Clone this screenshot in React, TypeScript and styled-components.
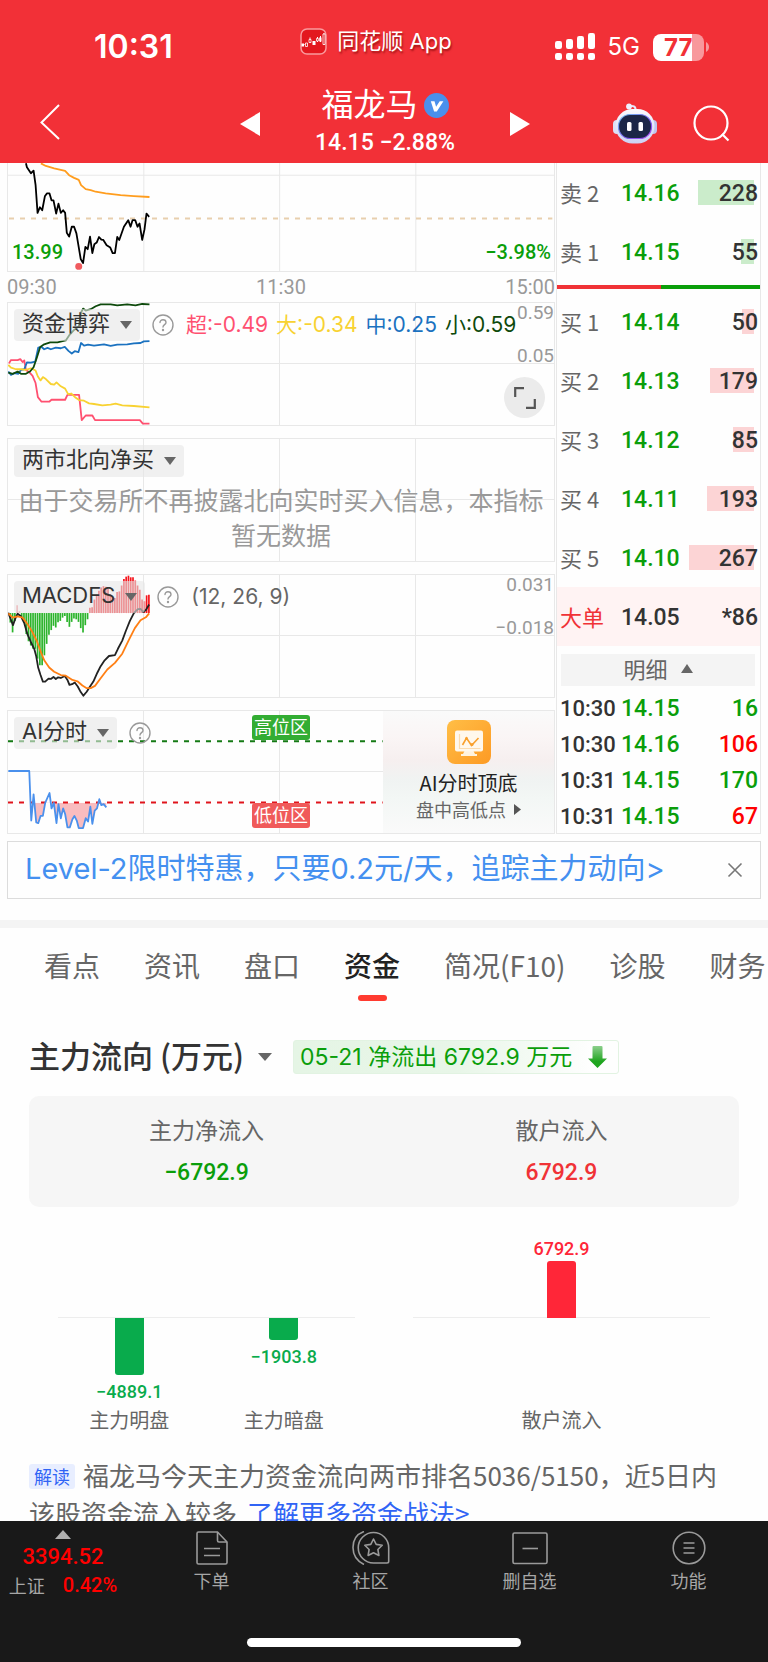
import React from 'react';
import styled, { createGlobalStyle, css } from 'styled-components';

const sans = `Inter, "Noto Sans CJK SC", sans-serif`;
const cjk = `"Noto Sans CJK SC", sans-serif`;
const digits = `Roboto, "Noto Sans CJK SC", sans-serif`;

const color = {
  brand: '#f23037',
  up: '#ff0000',
  rise: '#f03236',
  down: '#0a9e0a',
  ink: '#333333',
  text: '#666666',
  muted: '#999999',
  line: '#e8e8e8',
  link: '#3064f5',
  barUp: '#ff2638',
  barDown: '#09ab4c',
};

const GlobalStyle = createGlobalStyle`
  *, *::before, *::after { box-sizing: border-box; }
  body { margin: 0; background: #fefefe; font-family: ${sans}; color: ${color.ink}; }
  button { border: 0; padding: 0; margin: 0; background: none; font: inherit; color: inherit; cursor: pointer; }
  a { color: inherit; text-decoration: none; }
  h1, h2, p { margin: 0; font-weight: 400; }
  svg { display: block; flex: none; }
`;

const Screen = styled.div`
  display: flex;
  flex-direction: column;
  height: 100vh;
  overflow: hidden;
`;

/* ---------- header ---------- */

const Header = styled.header`
  flex: none;
  background: ${color.brand};
  color: #fff;
`;

const StatusBar = styled.div`
  display: grid;
  grid-template-columns: 1fr auto 1fr;
  align-items: center;
  height: 80px;
  padding: 14px 59px 0 43px;
`;

const Clock = styled.time`
  padding-left: 51px;
  font-size: 32px;
  line-height: 40px;
  font-weight: 600;
`;

const AppMark = styled.div`
  display: flex;
  align-items: center;
  gap: 10px;
  padding-bottom: 12px;
  font-size: 22px;
  line-height: 30px;
  text-shadow: 1px 2px 2px rgba(110, 0, 0, 0.6);
`;

const StatusIcons = styled.div`
  display: flex;
  justify-content: flex-end;
  align-items: center;
  gap: 13px;
  font-size: 24px;
  line-height: 28px;
`;

const NavBar = styled.div`
  display: grid;
  grid-template-columns: 1fr auto 1fr;
  align-items: center;
  height: 83px;
  padding: 4px 38px 0 40px;
`;

const NavCenter = styled.div`
  display: flex;
  align-items: center;
  gap: 51px;
`;

const NavActions = styled.div`
  display: flex;
  justify-content: flex-end;
  align-items: center;
  gap: 36px;
`;

const Stock = styled.div`
  width: 148px;
  display: flex;
  flex-direction: column;
  align-items: center;
`;

const StockName = styled.h1`
  display: flex;
  align-items: center;
  gap: 6px;
  padding-bottom: 6px;
  font-family: ${cjk};
  font-size: 32px;
  line-height: 32px;
  white-space: nowrap;

  svg { margin-top: 7px; }
`;

const StockQuote = styled.div`
  font-family: ${digits};
  font-size: 23px;
  line-height: 38px;
  font-weight: 500;
  white-space: nowrap;
`;

/* ---------- quote area ---------- */

const Scroller = styled.main`
  flex: 1;
  min-height: 0;
  overflow: hidden;
`;

const QuoteArea = styled.section`
  display: grid;
  grid-template-columns: minmax(0, 1fr) 206px;
  padding: 0 7px;
`;

const Charts = styled.div`
  display: flex;
  flex-direction: column;
  gap: 12px;
`;

const Panel = styled.div<{ $h: number }>`
  position: relative;
  height: ${(p) => p.$h}px;
  border: 1px solid ${color.line};
  border-width: ${(p) => (p.$h < 120 ? '0 1px 1px' : '1px')};
`;

const Plot = styled.svg`
  position: absolute;
  inset: 0;
  width: 100%;
  height: 100%;

  * { vector-effect: non-scaling-stroke; }
`;

const AxisRow = styled.div`
  display: flex;
  justify-content: space-between;
  height: 30px;
  margin-bottom: -12px;
  font-family: ${digits};
  font-size: 20px;
  line-height: 30px;
  color: ${color.muted};
`;

const CornerLabels = styled.div`
  position: absolute;
  left: 4px;
  right: 3px;
  bottom: 6px;
  display: flex;
  justify-content: space-between;
  font-family: ${digits};
  font-size: 20px;
  line-height: 26px;
  font-weight: 500;
  color: ${color.down};
`;

const PanelHead = styled.div`
  position: relative;
  display: flex;
  align-items: center;
  gap: 12px;
  padding: 6px 0 0 6px;
  height: 38px;
`;

const Pill = styled.button`
  display: flex;
  align-items: center;
  gap: 10px;
  height: 32px;
  padding: 0 8px 4px;
  border-radius: 4px;
  background: rgba(230, 230, 230, 0.6);
  font-size: 22px;
  line-height: 28px;
  white-space: nowrap;

  svg { margin-top: 4px; }
`;

const Legend = styled.div`
  display: flex;
  gap: 8px;
  font-size: 21px;
  line-height: 28px;
  white-space: nowrap;
`;

const LegendItem = styled.span<{ $c: string }>`
  color: ${(p) => p.$c};
`;

const AxisValues = styled.div`
  position: absolute;
  top: -3px;
  right: 0;
  display: flex;
  flex-direction: column;
  gap: 17px;
  text-align: right;
  font-family: ${digits};
  font-size: 19px;
  line-height: 26px;
  color: ${color.muted};
`;

const ExpandButton = styled.button`
  position: absolute;
  right: 9px;
  bottom: 7px;
  width: 41px;
  height: 41px;
  border-radius: 50%;
  background: #ebebeb;
  display: grid;
  place-items: center;
`;

const EmptyNote = styled.p`
  position: relative;
  padding: 5px 9px 0;
  text-align: center;
  font-family: ${cjk};
  font-size: 25px;
  line-height: 35px;
  color: ${color.muted};
`;

const ZoneTag = styled.span<{ $low?: boolean }>`
  position: absolute;
  left: 244px;
  top: ${(p) => (p.$low ? 92 : 4)}px;
  padding: 0 2px 3px;
  border-radius: 3px;
  background: ${(p) => (p.$low ? '#f05a5a' : '#33ad33')};
  color: #fff;
  font-family: ${cjk};
  font-size: 18px;
  line-height: 22px;
`;

const Promo = styled.a`
  position: absolute;
  right: 0;
  top: 0;
  bottom: 0;
  width: 171px;
  display: flex;
  flex-direction: column;
  align-items: center;
  padding-top: 9px;
  background: linear-gradient(180deg, #fafafa 0%, #faf5f5 22%, #f6efef 40%, #f0f3f2 56%, #f3f7f5 72%, #fafafa 100%);
  font-family: ${cjk};
`;

const PromoTitle = styled.span`
  margin-top: 6px;
  font-size: 20px;
  line-height: 26px;
  color: #222;
`;

const PromoSub = styled.span`
  display: flex;
  align-items: center;
  gap: 8px;
  font-size: 18px;
  line-height: 26px;
  color: ${color.text};
`;

/* ---------- order book ---------- */

const Book = styled.aside`
  border: 1px solid ${color.line};
  border-width: 0 1px 1px;
  font-family: ${digits};
  margin-left: 1px;
`;

const BookTable = styled.table<{ $row: number }>`
  width: 100%;
  table-layout: fixed;
  border-collapse: collapse;

  tr { height: ${(p) => p.$row}px; }
  th, td { padding: 3px 0 0; font-weight: 500; font-size: 23px; line-height: 32px; text-align: left; white-space: nowrap; }
  th { width: 64px; padding-left: 3px; font-size: 22px; }
  td:last-child { padding-right: 2px; text-align: right; }
`;

const Level = styled.th<{ $hot?: boolean }>`
  && {
    padding-top: 0;
    padding-bottom: 2px;
    font-family: ${cjk};
    font-weight: 400;
    color: ${(p) => (p.$hot ? color.rise : color.text)};
  }
`;

const Price = styled.td<{ $c: string }>`
  color: ${(p) => p.$c};
`;

const Qty = styled.td<{ $c?: string }>`
  position: relative;
  color: ${(p) => p.$c ?? color.ink};
`;

const DepthBar = styled.i<{ $sell: boolean }>`
  position: absolute;
  right: 6px;
  top: 50%;
  height: 25px;
  margin-top: -13px;
  background: ${(p) => (p.$sell ? '#cbeccb' : '#fcd4d5')};
`;

const QtyText = styled.span`
  position: relative;
`;

const BigOrder = styled.tr`
  background: #fff3f3;
`;

const Balance = styled.div`
  display: flex;
  height: 4px;
  margin: 4px 0 3px;
`;

const BalancePart = styled.div<{ $c: string }>`
  background: ${(p) => p.$c};
`;

const DetailButton = styled.button`
  display: flex;
  align-items: center;
  justify-content: center;
  gap: 13px;
  width: calc(100% - 9px);
  height: 32px;
  margin: 8px 4px 3px;
  padding-bottom: 3px;
  background: #f4f4f4;
  font-family: ${cjk};
  font-size: 22px;
  line-height: 29px;
  color: ${color.text};
`;

/* ---------- banner and tabs ---------- */

const Banner = styled.div`
  display: flex;
  align-items: center;
  justify-content: space-between;
  height: 58px;
  margin: 7px 7px 0;
  padding: 0 17px;
  border: 1px solid #dcdcdc;
`;

const BannerLink = styled.a`
  padding-bottom: 3px;
  font-size: 29px;
  line-height: 40px;
  color: #4490f0;
  white-space: nowrap;
`;

const Tabs = styled.nav`
  display: flex;
  gap: 44px;
  margin-top: 21px;
  padding: 17px 0 0 44px;
  border-top: 8px solid #f4f4f4;
  overflow: hidden;
`;

const Tab = styled.button<{ $on?: boolean }>`
  flex: none;
  display: flex;
  flex-direction: column;
  align-items: center;
  gap: 10px;
  font-family: ${cjk};
  font-size: 28px;
  line-height: 40px;
  color: ${color.text};

  &::after {
    content: '';
    width: 29px;
    height: 6px;
    border-radius: 3px;
    background: transparent;
  }

  ${(p) =>
    p.$on &&
    css`
      font-weight: 500;
      color: #222;
      &::after { background: #ff3b30; }
    `}
`;

/* ---------- capital flow ---------- */

const Flow = styled.section`
  padding: 38px 29px 0;
  font-family: ${cjk};
`;

const FlowHead = styled.div`
  display: flex;
  align-items: center;
  gap: 21px;
  height: 36px;
`;

const FlowTitle = styled.h2`
  padding-bottom: 4px;
  font-size: 31px;
  line-height: 36px;
  font-weight: 500;
`;

const TitleButton = styled.button`
  display: flex;
  align-items: center;
  gap: 14px;
  white-space: nowrap;

  svg { margin-top: 4px; }
`;

const FlowBadge = styled.span`
  display: flex;
  align-items: center;
  gap: 16px;
  height: 34px;
  padding: 0 11px 0 6px;
  border: 1px solid #e2f3e2;
  border-radius: 3px;
  background: linear-gradient(90deg, #e5f5e5 0%, #e8f6e8 50%, #fefefe 92%);
  font-family: ${sans};
  font-size: 23px;
  line-height: 32px;
  color: ${color.down};
  white-space: nowrap;
`;

const Summary = styled.div`
  display: flex;
  margin-top: 21px;
  padding: 16px 0 17px;
  border-radius: 10px;
  background: #f6f6f6;
`;

const SummaryItem = styled.div`
  flex: 1;
  display: flex;
  flex-direction: column;
  align-items: center;
  gap: 8px;
  font-size: 23px;
  line-height: 35px;
  color: ${color.text};
`;

const SummaryValue = styled.strong<{ $c: string }>`
  font-family: ${digits};
  font-weight: 500;
  color: ${(p) => p.$c};
`;

const BarGroups = styled.div`
  display: flex;
`;

const BarGroup = styled.div`
  flex: 1;
  display: flex;
  gap: 12px;
  margin: 0 29px;
  background: linear-gradient(#ededed, #ededed) 0 110px / 100% 1px no-repeat;
`;

const BarColumn = styled.div`
  flex: 1;
  display: flex;
  flex-direction: column;
  align-items: center;
  font-size: 20px;
  line-height: 24px;
  color: ${color.text};
`;

const Half = styled.div<{ $up?: boolean }>`
  display: flex;
  flex-direction: column;
  align-items: center;
  justify-content: ${(p) => (p.$up ? 'flex-end' : 'flex-start')};
  gap: ${(p) => (p.$up ? 0 : 5)}px;
  height: ${(p) => (p.$up ? 111 : 90)}px;
`;

const FlowBar = styled.div<{ $up?: boolean }>`
  width: 29px;
  border-radius: ${(p) => (p.$up ? '3px 3px 0 0' : '0 0 3px 3px')};
  background: ${(p) => (p.$up ? color.barUp : color.barDown)};
`;

const BarValue = styled.span<{ $up?: boolean }>`
  font-family: ${digits};
  font-size: 18px;
  line-height: 24px;
  font-weight: 500;
  color: ${(p) => (p.$up ? color.barUp : color.barDown)};
`;

const Reading = styled.p`
  margin-top: 24px;
  font-size: 26px;
  line-height: 38px;
  color: ${color.text};
`;

const ReadingTag = styled.span`
  display: inline-block;
  margin-right: 8px;
  padding: 0 5px;
  border-radius: 3px;
  background: #e8eeff;
  font-size: 18px;
  line-height: 25px;
  vertical-align: 2px;
  color: ${color.link};
`;

const ReadingLink = styled.a`
  margin-left: 10px;
  color: ${color.link};
`;

/* ---------- bottom bar ---------- */

const Footer = styled.footer`
  flex: none;
  background: #191919;
  color: #a6a6a6;
`;

const FooterRow = styled.nav`
  display: grid;
  grid-template-columns: 132px repeat(4, 1fr);
  height: 117px;
`;

const IndexButton = styled.button`
  display: flex;
  flex-direction: column;
  align-items: center;
  align-self: start;
  padding: 9px 6px 0 0;
`;

const IndexValue = styled.span`
  padding-top: 3px;
  font-family: ${digits};
  font-size: 22px;
  line-height: 30px;
  font-weight: 500;
  color: ${color.up};
`;

const IndexChange = styled.span`
  display: flex;
  gap: 18px;
  font-family: ${cjk};
  font-size: 18px;
  line-height: 26px;

  b {
    font-family: ${digits};
    font-size: 20px;
    font-weight: 500;
    color: ${color.up};
  }
`;

const FooterButton = styled.button`
  display: flex;
  flex-direction: column;
  align-items: center;
  align-self: start;
  gap: 2px;
  padding-top: 10px;
  font-family: ${cjk};
  font-size: 18px;
  line-height: 26px;
`;

const HomeIndicator = styled.div`
  width: 274px;
  height: 9px;
  margin: 0 auto 15px;
  border-radius: 5px;
  background: #fff;
`;

/* ---------- icons ---------- */

const Caret = ({ up, w = 12, h = 8, fill = '#666' }: { up?: boolean; w?: number; h?: number; fill?: string }) => (
  <svg width={w} height={h} viewBox="0 0 12 8" preserveAspectRatio="none">
    <path d={up ? 'M6 0L12 8H0z' : 'M0 0h12L6 8z'} fill={fill} />
  </svg>
);

const HelpIcon = () => (
  <svg width="22" height="22" viewBox="0 0 22 22" fill="none" stroke="#999" strokeWidth="1.4" strokeLinecap="round">
    <circle cx="11" cy="11" r="10" />
    <path d="M8 8.600c0-1.800 1.300-2.900 3-2.900s3 1.100 3 2.700c0 2.200-3 2.300-3 4.600" />
    <circle cx="11" cy="16" r=".500" />
  </svg>
);

const AppIcon = () => (
  <svg width="27" height="27" viewBox="0 0 27 27">
    <rect x="1" y="1" width="25" height="25" rx="6" fill="#e3181e" stroke="#f99a9d" strokeWidth="1.5" />
    <path d="M2 16.500h2.600M10 9.500v5M14 13v4M17.500 9v5M20.500 8v6M24 5v12" stroke="#fff" strokeWidth="1" fill="none" />
    <path d="M1.500 15.500h2.500v3H1.500zM12.500 13h3v4h-3zM19.200 9.500h2.300v4h-2.300z" fill="#fff" />
    <path d="M5.500 15h2v3.500h-2zM9 11.500h2v3H9zM16.500 10.500h1.800v2.500h-1.800zM23 6h2v10.500h-2z" fill="#e3181e" stroke="#fff" strokeWidth=".8" />
  </svg>
);

const SignalIcon = () => (
  <svg width="40" height="28" viewBox="0 0 40 28" fill="#fff">
    {[[0, 8, 8], [11, 6, 10], [22, 3, 13], [33, 0, 16]].map(([x, y, h]) => (
      <React.Fragment key={x}>
        <rect x={x} y={y} width="7" height={h} rx="2.200" />
        <rect x={x} y="20" width="7" height="7" rx="2.200" />
      </React.Fragment>
    ))}
  </svg>
);

const BatteryBox = styled.div`
  display: flex;
  align-items: center;
  gap: 2px;
`;

const BatteryLevel = styled.span`
  width: 51px;
  height: 27px;
  padding-left: 11px;
  border-radius: 8px;
  background: linear-gradient(90deg, #fff 76%, #f8989c 76%);
  color: ${color.brand};
  font-size: 24px;
  line-height: 27px;
  font-weight: 700;
`;

const BackIcon = () => (
  <svg width="20" height="36" viewBox="0 0 20 36" fill="none" stroke="#fff" strokeWidth="2">
    <path d="M19 1L1.500 18.500 19 35" />
  </svg>
);

const VerifiedIcon = () => (
  <svg width="25" height="25" viewBox="0 0 25 25">
    <circle cx="12.500" cy="12.500" r="12.500" fill="#4a90ec" />
    <path d="M6.800 8.200h3.700l1.600 5.600 3.600-5.600h3.700l-6.600 10.200h-2.700z" fill="#fff" />
  </svg>
);

const RobotIcon = () => (
  <svg width="44" height="41" viewBox="0 0 44 41">
    <defs>
      <linearGradient id="shell" x1="0" y1="0" x2="0" y2="1">
        <stop offset="0" stopColor="#fbfbff" />
        <stop offset="1" stopColor="#ccd2f4" />
      </linearGradient>
      <linearGradient id="rim" x1="0" y1="0" x2="1" y2="1">
        <stop offset="0" stopColor="#74c6f0" />
        <stop offset=".6" stopColor="#7a5af0" />
        <stop offset="1" stopColor="#b04cf0" />
      </linearGradient>
    </defs>
    <path d="M16 3.500c4-1.500 7 0 6.500 4" fill="none" stroke="#e6e8fb" strokeWidth="2" />
    <circle cx="16" cy="3.400" r="2.900" fill="#eef0ff" />
    <rect x="0" y="17" width="8" height="14" rx="4" fill="#dde0f6" />
    <rect x="36" y="17" width="8" height="14" rx="4" fill="#bfc5ee" />
    <rect x="2.500" y="6" width="39" height="34.500" rx="17" fill="url(#shell)" />
    <rect x="5.500" y="11.500" width="33" height="24" rx="11.500" fill="#1c2647" stroke="url(#rim)" strokeWidth="1.200" />
    <rect x="14" y="19" width="4.500" height="9" rx="1.500" fill="#fff" />
    <rect x="25.500" y="19" width="4.500" height="9" rx="1.500" fill="#fff" />
  </svg>
);

const SearchIcon = () => (
  <svg width="37" height="37" viewBox="0 0 37 37" fill="none" stroke="#fff" strokeWidth="2.200">
    <circle cx="18" cy="18" r="16.500" />
    <path d="M29 29l6.500 6.500" />
  </svg>
);

const ExpandIcon = () => (
  <svg width="22" height="22" viewBox="0 0 22 22" fill="none" stroke="#555" strokeWidth="2.200">
    <path d="M1.200 10V1.200H10M20.800 12v8.800H12" />
  </svg>
);

const BoardIcon = () => (
  <svg width="44" height="44" viewBox="0 0 44 44">
    <defs>
      <linearGradient id="gold" x1="0" y1="0" x2="1" y2="1">
        <stop offset="0" stopColor="#ffbe46" />
        <stop offset="1" stopColor="#fd9a24" />
      </linearGradient>
    </defs>
    <rect width="44" height="44" rx="8" fill="url(#gold)" />
    <path d="M17.500 31h9l1.500 3h2v2H14v-2h2z" fill="#fff3de" />
    <rect x="8" y="10.500" width="28" height="21" rx="2" fill="#fff8ec" />
    <path d="M12.500 14v14.500h21" fill="none" stroke="#fbdcae" strokeWidth="1.200" />
    <path d="M15.500 25l4-7 5 7.500 7-7.500" fill="none" stroke="#f9a02c" strokeWidth="1.600" />
    <circle cx="19.500" cy="18.500" r="1.500" fill="#f9a02c" />
    <circle cx="25" cy="24.500" r="1.500" fill="#f9a02c" />
  </svg>
);

const OrderIcon = () => (
  <svg width="34" height="34" viewBox="0 0 34 34" fill="none" stroke="#9a9a9a" strokeWidth="1.600">
    <path d="M22.500 1H3.500a1.500 1.500 0 0 0-1.500 1.500v29a1.500 1.500 0 0 0 1.500 1.500h27a1.500 1.500 0 0 0 1.500-1.500V11z" />
    <path d="M22.500 1v8.500A1.500 1.500 0 0 0 24 11h8M9 17.500h16M9 24.500h16" />
  </svg>
);

const CommunityIcon = () => (
  <svg width="38" height="34" viewBox="0 1 38 34" fill="none" stroke="#9a9a9a" strokeWidth="1.600">
    <path d="M12 1.500C5 4 1 10 1 17.500S5 31 12 34.500" />
    <path d="M21.500 2.500a15.200 15.200 0 1 0 0 30.500H35a1.700 1.700 0 0 0 1.700-1.700V17.700A15.200 15.200 0 0 0 21.500 2.500z" />
    <path d="M21.500 9l2.700 5.400 6 .9-4.300 4.200 1 6-5.400-2.800-5.400 2.800 1-6-4.300-4.200 6-.9z" strokeLinejoin="round" />
  </svg>
);

const RemoveIcon = () => (
  <svg width="36" height="34" viewBox="0 0 36 34" fill="none" stroke="#9a9a9a" strokeWidth="1.600">
    <rect x="1" y="2" width="34" height="30.500" rx="1.500" />
    <path d="M10.500 17.500h15.500" />
  </svg>
);

const MenuIcon = () => (
  <svg width="34" height="34" viewBox="0 0 34 34" fill="none" stroke="#9a9a9a" strokeWidth="1.600">
    <circle cx="17" cy="17" r="15.800" />
    <path d="M11.500 12h11M11.500 17h11M11.500 22h11" />
  </svg>
);

const DownArrow = () => (
  <svg width="19" height="22" viewBox="0 0 19 22">
    <defs>
      <linearGradient id="drop" x1="0" y1="0" x2="0" y2="1">
        <stop offset="0" stopColor="#8ccf8c" />
        <stop offset=".7" stopColor="#1fa51f" />
      </linearGradient>
    </defs>
    <path d="M4.500 1a1 1 0 0 1 1-1h8a1 1 0 0 1 1 1v11.500H19L9.500 22 0 12.500h4.500z" fill="url(#drop)" />
  </svg>
);

/* ---------- data ---------- */

const sells = [['卖 2', '14.16', 228], ['卖 1', '14.15', 55]] as const;
const buys = [
  ['买 1', '14.14', 50],
  ['买 2', '14.13', 179],
  ['买 3', '14.12', 85],
  ['买 4', '14.11', 193],
  ['买 5', '14.10', 267],
] as const;
const trades = [
  ['10:30', '14.15', 16, false],
  ['10:30', '14.16', 106, true],
  ['10:31', '14.15', 170, false],
  ['10:31', '14.15', 67, true],
] as const;

/* quantity that would fill the whole quantity column */
const FULL_DEPTH = 285;

/* MACD histogram: bar ends in plot units, one bar each 6.8 units from x = 28 */
const macdBars = [
  575, 605, 570, 522, 540, 560, 575, 610, 632, 645, 655, 655, 685, 705, 705, 675, 640, 612, 598, 585, 590, 574, 570, 560,
  555, 573, 588, 573, 563, 565, 573, 592, 605, 583, 565, 530, 528, 505, 490, 478, 468, 464, 466, 472, 488, 496, 500, 482,
  480, 462, 442, 435, 432, 437, 437, 447, 462, 475, 505, 510, 492, 490,
];

const aiLine =
  '22,211 85,211 91,362 98,282 106,368 112,370 119,348 126,348 133,308 146,278 152,325 159,308 167,370 173,312 180,355 187,325 193,342 200,383 207,383 215,358 221,348 228,362 234,385 247,385 255,355 262,365 269,320 275,372 282,332 289,325 296,297 302,315 309,312 317,322';

const Grid = ({ top, mid, bottom }: { top: number; mid: number; bottom: number }) => (
  <path
    d={`M430 ${top}V${bottom}M839 ${top}V${bottom}M1249 ${top}V${bottom}M21 ${mid}H1665`}
    stroke={color.line}
    strokeWidth="1"
    shapeRendering="crispEdges"
    fill="none"
  />
);

const Line = ({ points, c, w = 1.8 }: { points: string; c: string; w?: number }) => (
  <polyline points={points} stroke={c} strokeWidth={w} fill="none" strokeLinejoin="round" />
);

const DepthRow = ({ row, sell }: { row: readonly [string, string, number]; sell: boolean }) => (
  <tr>
    <Level scope="row">{row[0]}</Level>
    <Price $c={color.down}>{row[1]}</Price>
    <Qty>
      <DepthBar $sell={sell} style={{ width: `${(row[2] / FULL_DEPTH) * 100}%` }} />
      <QtyText>{row[2]}</QtyText>
    </Qty>
  </tr>
);

export default function App() {
  return (
    <Screen>
      <GlobalStyle />
      <Header>
        <StatusBar>
          <Clock>10:31</Clock>
          <AppMark>
            <AppIcon />
            同花顺 App
          </AppMark>
          <StatusIcons>
            <SignalIcon />
            5G
            <BatteryBox>
              <BatteryLevel>77</BatteryLevel>
              <svg width="3" height="10" viewBox="0 0 3 10"><path d="M0 0c4 2 4 8 0 10z" fill="#f8989c" /></svg>
            </BatteryBox>
          </StatusIcons>
        </StatusBar>
        <NavBar>
          <div>
            <button aria-label="返回"><BackIcon /></button>
          </div>
          <NavCenter>
            <button aria-label="上一只">
              <svg width="20" height="24" viewBox="0 0 20 24"><path d="M0 12L20 0v24z" fill="#fff" /></svg>
            </button>
            <Stock>
              <StockName>福龙马<VerifiedIcon /></StockName>
              <StockQuote>14.15 −2.88%</StockQuote>
            </Stock>
            <button aria-label="下一只">
              <svg width="20" height="24" viewBox="0 0 20 24"><path d="M20 12L0 0v24z" fill="#fff" /></svg>
            </button>
          </NavCenter>
          <NavActions>
            <button aria-label="智能助手"><RobotIcon /></button>
            <button aria-label="搜索"><SearchIcon /></button>
          </NavActions>
        </NavBar>
      </Header>

      <Scroller>
        <QuoteArea>
          <Charts>
            <div>
              <Panel $h={109}>
                <Plot viewBox="21 9 1644 327" preserveAspectRatio="none">
                  <Grid top={9} mid={46} bottom={336} />
                  <path d="M24 177H1660" stroke="#e8cfae" strokeWidth="1.800" strokeDasharray="5 6" />
                  <Line c="#ff9d1e" points="120,10 135,18 160,25 193,33 205,46 220,54 234,60 241,76 255,88 270,91 285,96 315,101 360,106 400,109 447,112" />
                  <Line c="#000" points="75,10 78,22 90,40 98,32 104,75 110,160 117,143 124,152 132,110 138,101 146,101 152,122 158,122 166,162 173,132 180,160 187,152 193,160 198,220 205,232 213,202 220,202 227,222 240,300 247,312 254,263 261,270 268,232 275,282 281,255 288,250 295,233 302,241 308,242 318,258 329,265 336,282 343,282 350,233 356,242 370,202 383,182 390,202 396,182 404,182 411,202 417,192 425,242 432,210 438,162 446,172" />
                  <circle cx="234" cy="322" r="10.500" fill="#f05a5e" />
                </Plot>
                <CornerLabels><span>13.99</span><span>−3.98%</span></CornerLabels>
              </Panel>
              <AxisRow><span>09:30</span><span>11:30</span><span>15:00</span></AxisRow>
            </div>

            <Panel $h={124}>
              <Plot viewBox="21 426 1644 372" preserveAspectRatio="none">
                <Grid top={426} mid={611} bottom={798} />
                <Line c="#ff5070" points="24,610 30,600 50,600 58,597 65,606 70,601 75,630 85,637 95,648 104,670 111,713 122,727 145,727 152,721 193,721 200,706 235,706 243,783 255,769 275,769 283,783 418,783 427,794 447,794" />
                <Line c="#1b72c0" points="22,635 30,645 40,640 52,642 60,630 70,628 78,607 90,608 103,605 112,562 122,560 130,567 140,563 150,567 165,562 180,564 192,560 203,572 213,580 222,573 233,576 241,548 250,556 262,553 280,556 310,552 330,557 350,553 380,552 400,549 420,548 430,543 447,542" />
                <Line c="#f8d232" points="22,615 30,623 45,628 60,628 75,630 90,625 104,632 111,650 119,662 126,652 135,658 150,673 160,675 167,668 180,680 193,687 202,704 212,702 225,715 235,722 250,724 265,732 280,734 305,738 330,736 345,733 365,738 400,740 447,744" />
                <Line c="#0e4a0c" points="22,638 35,642 50,635 60,642 75,642 88,634 98,622 108,592 118,560 130,552 148,546 170,546 195,540 205,525 220,508 234,498 241,455 247,443 255,449 270,445 285,436 300,430 330,430 350,433 380,430 405,433 425,429 447,430" />
              </Plot>
              <AxisValues><span>0.59</span><span>0.05</span></AxisValues>
              <PanelHead>
                <Pill>资金博弈 <Caret /></Pill>
                <HelpIcon />
                <Legend>
                  <LegendItem $c="#ff5070">超:-0.49</LegendItem>
                  <LegendItem $c="#f8d232">大:-0.34</LegendItem>
                  <LegendItem $c="#1b72c0">中:0.25</LegendItem>
                  <LegendItem $c="#0e4a0c">小:0.59</LegendItem>
                </Legend>
              </PanelHead>
              <ExpandButton aria-label="全屏"><ExpandIcon /></ExpandButton>
            </Panel>

            <Panel $h={124}>
              <Plot viewBox="21 22 1644 372" preserveAspectRatio="none">
                <Grid top={22} mid={208} bottom={394} />
              </Plot>
              <PanelHead>
                <Pill>两市北向净买 <Caret /></Pill>
              </PanelHead>
              <EmptyNote>由于交易所不再披露北向实时买入信息，本指标暂无数据</EmptyNote>
            </Panel>

            <Panel $h={124}>
              <Plot viewBox="21 430 1644 372" preserveAspectRatio="none">
                <Grid top={430} mid={616} bottom={802} />
                {macdBars.map((end, i) => (
                  <path
                    key={i}
                    d={`M${28 + i * 6.84} 546V${end}`}
                    stroke={end > 546 ? '#2cb42c' : i < 6 ? '#f58a90' : '#f5141c'}
                    strokeWidth="1.700"
                  />
                ))}
                <Line c="#222" points="22,545 28,562 36,583 44,560 50,548 60,556 70,577 80,612 90,635 100,655 106,678 112,713 119,735 126,755 133,755 143,746 150,747 158,741 165,747 172,742 180,744 192,738 200,750 206,765 214,763 222,758 231,770 240,787 248,798 258,786 268,770 278,755 290,728 300,708 312,690 325,677 343,674 352,655 365,630 376,600 388,570 400,546 412,534 420,533 428,543 436,537 446,520" />
                <Line c="#ff7f14" points="22,547 35,560 50,556 65,560 80,580 95,605 108,632 118,660 130,690 145,712 160,725 180,735 195,737 215,750 230,754 245,767 258,775 270,775 283,768 300,745 320,718 343,698 365,670 385,628 403,592 420,568 436,559 446,547" />
              </Plot>
              <AxisValues><span>0.031</span><span>−0.018</span></AxisValues>
              <PanelHead>
                <Pill>MACDFS <Caret /></Pill>
                <HelpIcon />
                <Legend><LegendItem $c={color.text}>(12, 26, 9)</LegendItem></Legend>
              </PanelHead>
            </Panel>

            <Panel $h={124}>
              <Plot viewBox="21 28 1644 372" preserveAspectRatio="none">
                <defs>
                  <clipPath id="lowZone"><rect x="21" y="308" width="1644" height="92" /></clipPath>
                </defs>
                <Grid top={28} mid={214} bottom={400} />
                <polygon points={`98,308 ${aiLine.split(' ').slice(3).join(' ')} 317,308`} fill="#f9bcbf" clipPath="url(#lowZone)" />
                <path d="M21 120H1149" stroke="#147a14" strokeWidth="2" strokeDasharray="5 6" />
                <path d="M21 307H1149" stroke="#e0141c" strokeWidth="2" strokeDasharray="5 6" />
                <Line c="#4a90ec" points={aiLine} />
              </Plot>
              <PanelHead>
                <Pill>AI分时 <Caret /></Pill>
                <HelpIcon />
              </PanelHead>
              <ZoneTag>高位区</ZoneTag>
              <ZoneTag $low>低位区</ZoneTag>
              <Promo href="#ai">
                <BoardIcon />
                <PromoTitle>AI分时顶底</PromoTitle>
                <PromoSub>
                  盘中高低点
                  <svg width="7" height="11" viewBox="0 0 7 11"><path d="M0 0l7 5.500L0 11z" fill="#555" /></svg>
                </PromoSub>
              </Promo>
            </Panel>
          </Charts>

          <Book>
            <BookTable $row={59}>
              <tbody>{sells.map((r) => <DepthRow key={r[0]} row={r} sell />)}</tbody>
            </BookTable>
            <Balance>
              <BalancePart $c={color.rise} style={{ width: '51%' }} />
              <BalancePart $c={color.down} style={{ width: '49%' }} />
            </Balance>
            <BookTable $row={59}>
              <tbody>
                {buys.map((r) => <DepthRow key={r[0]} row={r} sell={false} />)}
                <BigOrder>
                  <Level scope="row" $hot>大单</Level>
                  <Price $c={color.ink}>14.05</Price>
                  <Qty>*86</Qty>
                </BigOrder>
              </tbody>
            </BookTable>
            <DetailButton>明细 <Caret up h={9} /></DetailButton>
            <BookTable $row={36}>
              <tbody>
                {trades.map((t, i) => (
                  <tr key={i}>
                    <th scope="row">{t[0]}</th>
                    <Price $c={color.down}>{t[1]}</Price>
                    <Qty $c={t[3] ? color.up : color.down}>{t[2]}</Qty>
                  </tr>
                ))}
              </tbody>
            </BookTable>
          </Book>
        </QuoteArea>

        <Banner>
          <BannerLink href="#level2">Level-2限时特惠，只要0.2元/天，追踪主力动向&gt;</BannerLink>
          <button aria-label="关闭">
            <svg width="16" height="16" viewBox="0 0 16 16" stroke="#777" strokeWidth="1.600"><path d="M1.500 1.500l13 13M14.500 1.500l-13 13" /></svg>
          </button>
        </Banner>

        <Tabs>
          <Tab>看点</Tab>
          <Tab>资讯</Tab>
          <Tab>盘口</Tab>
          <Tab $on>资金</Tab>
          <Tab>简况(F10)</Tab>
          <Tab>诊股</Tab>
          <Tab>财务</Tab>
        </Tabs>

        <Flow>
          <FlowHead>
            <FlowTitle>
              <TitleButton>主力流向 (万元) <Caret w={14} h={8} /></TitleButton>
            </FlowTitle>
            <FlowBadge>05-21 净流出 6792.9 万元 <DownArrow /></FlowBadge>
          </FlowHead>
          <Summary>
            <SummaryItem>主力净流入<SummaryValue $c={color.down}>−6792.9</SummaryValue></SummaryItem>
            <SummaryItem>散户流入<SummaryValue $c={color.rise}>6792.9</SummaryValue></SummaryItem>
          </Summary>
          <BarGroups>
            <BarGroup>
              <BarColumn>
                <Half $up />
                <Half><FlowBar style={{ height: 57 }} /><BarValue>−4889.1</BarValue></Half>
                主力明盘
              </BarColumn>
              <BarColumn>
                <Half $up />
                <Half><FlowBar style={{ height: 22 }} /><BarValue>−1903.8</BarValue></Half>
                主力暗盘
              </BarColumn>
            </BarGroup>
            <BarGroup>
              <BarColumn>
                <Half $up><BarValue $up>6792.9</BarValue><FlowBar $up style={{ height: 57 }} /></Half>
                <Half />
                散户流入
              </BarColumn>
            </BarGroup>
          </BarGroups>
          <Reading>
            <ReadingTag>解读</ReadingTag>
            福龙马今天主力资金流向两市排名5036/5150，近5日内该股资金流入较多
            <ReadingLink href="#learn">了解更多资金战法&gt;</ReadingLink>
          </Reading>
        </Flow>
      </Scroller>

      <Footer>
        <FooterRow>
          <IndexButton>
            <Caret up w={16} h={9} fill="#b0b0b0" />
            <IndexValue>3394.52</IndexValue>
            <IndexChange>上证 <b>0.42%</b></IndexChange>
          </IndexButton>
          <FooterButton><OrderIcon />下单</FooterButton>
          <FooterButton><CommunityIcon />社区</FooterButton>
          <FooterButton><RemoveIcon />删自选</FooterButton>
          <FooterButton><MenuIcon />功能</FooterButton>
        </FooterRow>
        <HomeIndicator />
      </Footer>
    </Screen>
  );
}
